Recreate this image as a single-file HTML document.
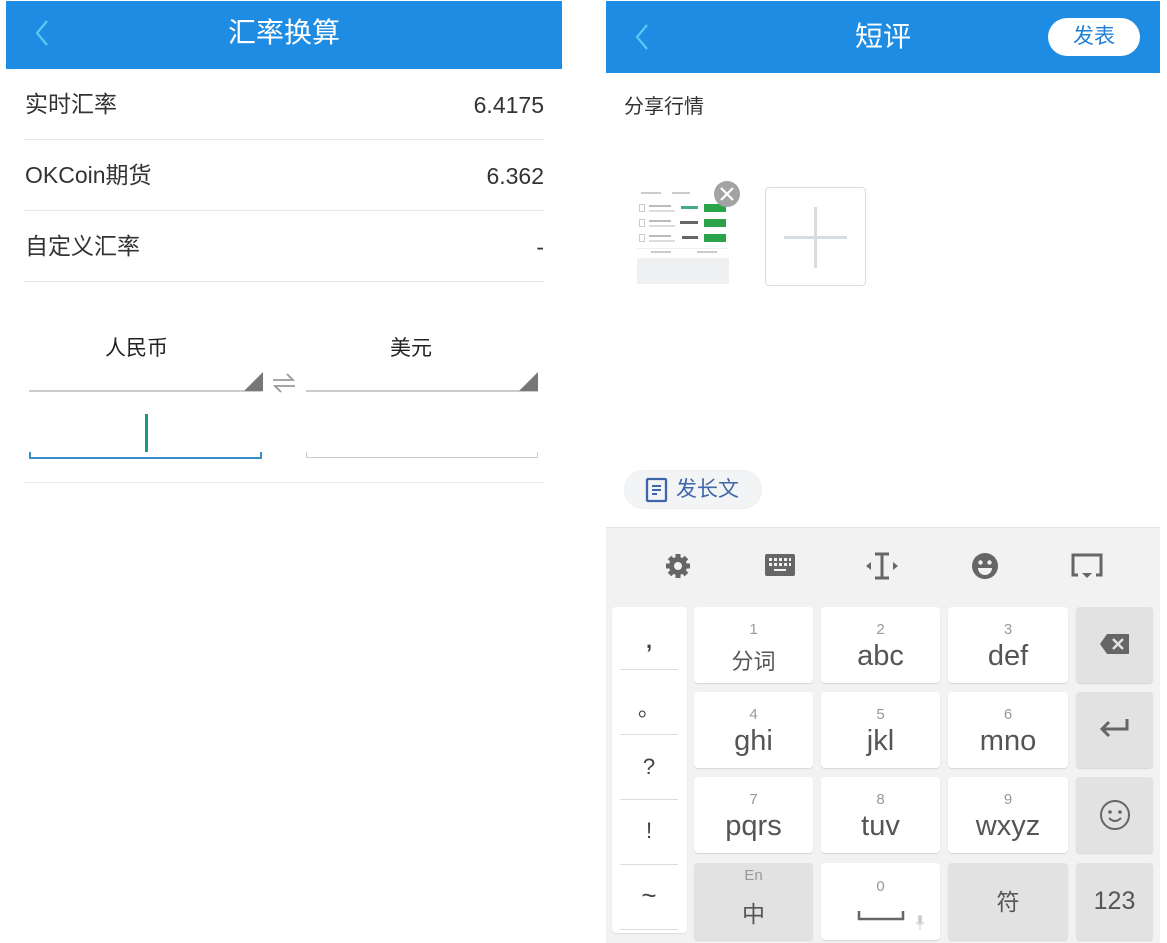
<!DOCTYPE html>
<html><head><meta charset="utf-8"><style>
*{margin:0;padding:0;box-sizing:border-box}
body{width:1167px;height:943px;background:#fff;position:relative;overflow:hidden;font-family:"Liberation Sans","Noto Sans CJK SC",sans-serif;color:#333}
.a{position:absolute}
.hdr{background:#1f8ce3;color:#fff;text-align:center}
.row{position:absolute;left:24px;width:520px;border-bottom:1px solid #e8e8e8;font-size:23px;color:#333}
.row span{position:absolute;line-height:30px;height:30px}
.key{position:absolute;background:#fff;border-radius:4px;box-shadow:0 1px 1px #d6d6d6;text-align:center;color:#555}
.key.g{background:#e2e2e2}
.key .n{position:absolute;left:0;right:0;top:14px;font-size:15px;color:#999;line-height:18px}
.key .l{position:absolute;left:0;right:0;top:32px;font-size:29px;color:#555;line-height:34px}
.sym{position:absolute;left:620px;width:58px;text-align:center;font-size:22px;color:#444;border-bottom:1px solid #ddd;line-height:30px}
</style></head><body>
<!-- LEFT -->
<div class="a hdr" style="left:6px;top:1px;width:556px;height:68px;font-size:28px;line-height:64px">汇率换算</div>
<svg class="a" style="left:32px;top:18px" width="20" height="30"><path d="M15 3 L5 15 L15 27" stroke="#5bc8f5" stroke-width="2.2" fill="none"/></svg>
<div class="row" style="top:72px;height:68px"><span style="left:1px;top:17px">实时汇率</span><span style="right:0;top:18px">6.4175</span></div>
<div class="row" style="top:140px;height:71px"><span style="left:1px;top:20px">OKCoin期货</span><span style="right:0;top:21px">6.362</span></div>
<div class="row" style="top:211px;height:71px"><span style="left:1px;top:20px">自定义汇率</span><span style="right:0;top:21px">-</span></div>
<div class="a" style="left:105px;top:335px;font-size:21px;color:#222;line-height:28px">人民币</div>
<div class="a" style="left:390px;top:335px;font-size:21px;color:#222;line-height:28px">美元</div>
<div class="a" style="left:29px;top:390px;width:233px;height:2px;background:#ccc"></div>
<svg class="a" style="left:243px;top:372px" width="20" height="20"><path d="M20 0 L20 19 L1 19 Z" fill="#777"/></svg>
<div class="a" style="left:306px;top:390px;width:232px;height:2px;background:#ccc"></div>
<svg class="a" style="left:518px;top:372px" width="20" height="20"><path d="M20 0 L20 19 L1 19 Z" fill="#777"/></svg>
<svg class="a" style="left:271px;top:370px" width="26" height="26"><path d="M2 10 H22 L16 4 M24 16 H4 L10 22" stroke="#999" stroke-width="1.8" fill="none"/></svg>
<div class="a" style="left:145px;top:414px;width:3px;height:38px;background:#179a87"></div>
<div class="a" style="left:29px;top:452px;width:233px;height:7px;border:2px solid #3a8ec8;border-top:none"></div>
<div class="a" style="left:306px;top:452px;width:232px;height:6px;border:1px solid #ccc;border-top:none"></div>
<div class="a" style="left:24px;top:482px;width:520px;height:1px;background:#eaeaea"></div>
<!-- RIGHT -->
<div class="a hdr" style="left:606px;top:1px;width:554px;height:72px;font-size:28px;line-height:72px">短评</div>
<svg class="a" style="left:632px;top:22px" width="20" height="30"><path d="M15 3 L5 15 L15 27" stroke="#5bc8f5" stroke-width="2.2" fill="none"/></svg>
<div class="a" style="left:1048px;top:18px;width:92px;height:38px;background:#fff;border-radius:19px;color:#1f7fd6;font-size:21px;text-align:center;line-height:38px">发表</div>
<div class="a" style="left:624px;top:93px;font-size:20px;color:#333;line-height:28px">分享行情</div>
<div class="a" style="left:637px;top:187px;width:92px;height:97px;background:#fff">
<div class="a" style="left:0;top:71px;width:92px;height:26px;background:#eef0f2"></div>
<div class="a" style="left:4px;top:5px;width:20px;height:2px;background:#ccc"></div>
<div class="a" style="left:35px;top:5px;width:18px;height:2px;background:#ccc"></div>
<div class="a" style="left:67px;top:17px;width:22px;height:8px;background:#2aa34a"></div>
<div class="a" style="left:67px;top:32px;width:22px;height:8px;background:#2aa34a"></div>
<div class="a" style="left:67px;top:47px;width:22px;height:8px;background:#2aa34a"></div>
<div class="a" style="left:43px;top:34px;width:18px;height:3px;background:#666"></div>
<div class="a" style="left:45px;top:49px;width:16px;height:3px;background:#666"></div>
<div class="a" style="left:44px;top:19px;width:17px;height:3px;background:#4a8"></div>
<div class="a" style="left:2px;top:17px;width:6px;height:8px;border:1px solid #ccc"></div>
<div class="a" style="left:12px;top:18px;width:22px;height:2px;background:#bbb"></div>
<div class="a" style="left:12px;top:23px;width:26px;height:2px;background:#ddd"></div>
<div class="a" style="left:2px;top:32px;width:6px;height:8px;border:1px solid #ccc"></div>
<div class="a" style="left:12px;top:33px;width:22px;height:2px;background:#bbb"></div>
<div class="a" style="left:12px;top:38px;width:26px;height:2px;background:#ddd"></div>
<div class="a" style="left:2px;top:47px;width:6px;height:8px;border:1px solid #ccc"></div>
<div class="a" style="left:12px;top:48px;width:22px;height:2px;background:#bbb"></div>
<div class="a" style="left:12px;top:53px;width:26px;height:2px;background:#ddd"></div>
<div class="a" style="left:0;top:61px;width:92px;height:1px;background:#eee"></div>
<div class="a" style="left:14px;top:64px;width:20px;height:2px;background:#ccc"></div>
<div class="a" style="left:60px;top:64px;width:20px;height:2px;background:#ccc"></div>
</div>
<svg class="a" style="left:713px;top:180px" width="28" height="28"><circle cx="14" cy="14" r="13" fill="#a3a3a3"/><path d="M8 8 L20 20 M20 8 L8 20" stroke="#fff" stroke-width="2.2"/></svg>
<div class="a" style="left:765px;top:187px;width:101px;height:99px;border:1px solid #d8dde0;border-radius:4px"></div>
<div class="a" style="left:784px;top:236px;width:63px;height:3px;background:#d5dde2"></div>
<div class="a" style="left:814px;top:207px;width:3px;height:61px;background:#d5dde2"></div>
<div class="a" style="left:624px;top:470px;width:138px;height:39px;background:#f3f4f6;border-radius:20px;border:1px solid #eceef0"></div>
<svg class="a" style="left:645px;top:477px" width="24" height="26"><rect x="2" y="2" width="19" height="22" rx="1" fill="none" stroke="#3f66a8" stroke-width="2.3"/><path d="M7 9 H16 M7 13 H16 M7 17 H12" stroke="#3f66a8" stroke-width="2"/></svg>
<div class="a" style="left:676px;top:476px;font-size:21px;color:#3f66a8;line-height:28px">发长文</div>
<!-- keyboard -->
<div class="a" style="left:606px;top:527px;width:554px;height:416px;background:#f2f2f2;border-top:1px solid #e2e2e2"></div>
<svg class="a" style="left:664px;top:552px" width="28" height="28"><g fill="#666"><circle cx="14" cy="14" r="9"/><g stroke="#666" stroke-width="5"><path d="M14 2V26M2 14H26M5.5 5.5L22.5 22.5M22.5 5.5L5.5 22.5"/></g></g><circle cx="14" cy="14" r="4" fill="#f2f2f2"/></svg>
<svg class="a" style="left:764px;top:553px" width="32" height="25"><rect x="1" y="1" width="30" height="22" rx="2" fill="#666"/><g fill="#f2f2f2"><rect x="5" y="5" width="3" height="3"/><rect x="10" y="5" width="3" height="3"/><rect x="15" y="5" width="3" height="3"/><rect x="20" y="5" width="3" height="3"/><rect x="25" y="5" width="2" height="3"/><rect x="5" y="10" width="3" height="3"/><rect x="10" y="10" width="3" height="3"/><rect x="15" y="10" width="3" height="3"/><rect x="20" y="10" width="3" height="3"/><rect x="25" y="10" width="2" height="3"/><rect x="10" y="16" width="12" height="2"/></g></svg>
<svg class="a" style="left:865px;top:551px" width="34" height="30"><path d="M10 3H24M10 27H24M17 3V27" stroke="#666" stroke-width="3" fill="none"/><path d="M6 11L1 15L6 19Z M28 11L33 15L28 19Z" fill="#666"/></svg>
<svg class="a" style="left:971px;top:552px" width="28" height="28"><circle cx="14" cy="14" r="13" fill="#666"/><circle cx="9.5" cy="10.5" r="2.2" fill="#f2f2f2"/><circle cx="18.5" cy="10.5" r="2.2" fill="#f2f2f2"/><path d="M7 16 H21 A7 7 0 0 1 7 16Z" fill="#f2f2f2"/></svg>
<svg class="a" style="left:1071px;top:553px" width="32" height="26"><path d="M7 22H2V2H30V22H25" stroke="#666" stroke-width="3" fill="none"/><path d="M11 20H21L16 25Z" fill="#666"/></svg>
<div class="a" style="left:612px;top:607px;width:75px;height:326px;background:#fff;border-radius:4px;box-shadow:0 1px 1px #ddd"></div>
<div class="sym" style="top:626px;height:44px;font-weight:bold">,</div>
<div class="sym" style="top:694px;height:41px">。</div>
<div class="sym" style="top:752px;height:48px">?</div>
<div class="sym" style="top:816px;height:49px">!</div>
<div class="sym" style="top:880px;height:50px;font-size:26px">~</div>
<div class="key" style="left:694px;top:607px;width:119px;height:76px"><div class="n">1</div><div class="l" style="font-size:22px;top:38px">分词</div></div>
<div class="key" style="left:821px;top:607px;width:119px;height:76px"><div class="n">2</div><div class="l">abc</div></div>
<div class="key" style="left:948px;top:607px;width:120px;height:76px"><div class="n">3</div><div class="l">def</div></div>
<div class="key g" style="left:1076px;top:607px;width:77px;height:76px"><svg style="position:absolute;left:23px;top:25px" width="32" height="24"><path d="M8 2H30V22H8L1 12Z" fill="#666"/><path d="M14 7L24 17M24 7L14 17" stroke="#e2e2e2" stroke-width="2.5"/></svg></div>
<div class="key" style="left:694px;top:692px;width:119px;height:76px"><div class="n">4</div><div class="l">ghi</div></div>
<div class="key" style="left:821px;top:692px;width:119px;height:76px"><div class="n">5</div><div class="l">jkl</div></div>
<div class="key" style="left:948px;top:692px;width:120px;height:76px"><div class="n">6</div><div class="l">mno</div></div>
<div class="key g" style="left:1076px;top:692px;width:77px;height:76px"><svg style="position:absolute;left:23px;top:25px" width="32" height="24"><path d="M28 2V12H4 M10 5L3 12L10 19" stroke="#666" stroke-width="3" fill="none"/></svg></div>
<div class="key" style="left:694px;top:777px;width:119px;height:76px"><div class="n">7</div><div class="l">pqrs</div></div>
<div class="key" style="left:821px;top:777px;width:119px;height:76px"><div class="n">8</div><div class="l">tuv</div></div>
<div class="key" style="left:948px;top:777px;width:120px;height:76px"><div class="n">9</div><div class="l">wxyz</div></div>
<div class="key g" style="left:1076px;top:777px;width:77px;height:76px"><svg style="position:absolute;left:23px;top:22px" width="32" height="32"><circle cx="16" cy="16" r="14" fill="none" stroke="#666" stroke-width="2"/><circle cx="11" cy="13" r="1.8" fill="#666"/><circle cx="21" cy="13" r="1.8" fill="#666"/><path d="M10 19Q16 25 22 19" stroke="#666" stroke-width="2" fill="none"/></svg></div>
<div class="key g" style="left:694px;top:863px;width:119px;height:77px"><div class="n" style="top:4px">En</div><div class="l" style="font-size:23px;top:34px">中</div></div>
<div class="key" style="left:821px;top:863px;width:119px;height:77px"><div class="n" style="top:15px">0</div><svg style="position:absolute;left:36px;top:46px" width="50" height="14"><path d="M2 2V10H46V2" stroke="#666" stroke-width="2.5" fill="none"/></svg><svg style="position:absolute;left:94px;top:52px" width="10" height="16"><rect x="3" y="0" width="4" height="9" rx="2" fill="#ccc"/><path d="M1 7Q5 13 9 7M5 11V15" stroke="#ccc" fill="none"/></svg></div>
<div class="key g" style="left:948px;top:863px;width:120px;height:77px"><div class="l" style="font-size:23px;top:22px">符</div></div>
<div class="key g" style="left:1076px;top:863px;width:77px;height:77px"><div class="l" style="font-size:25px;top:21px">123</div></div>
</body></html>
